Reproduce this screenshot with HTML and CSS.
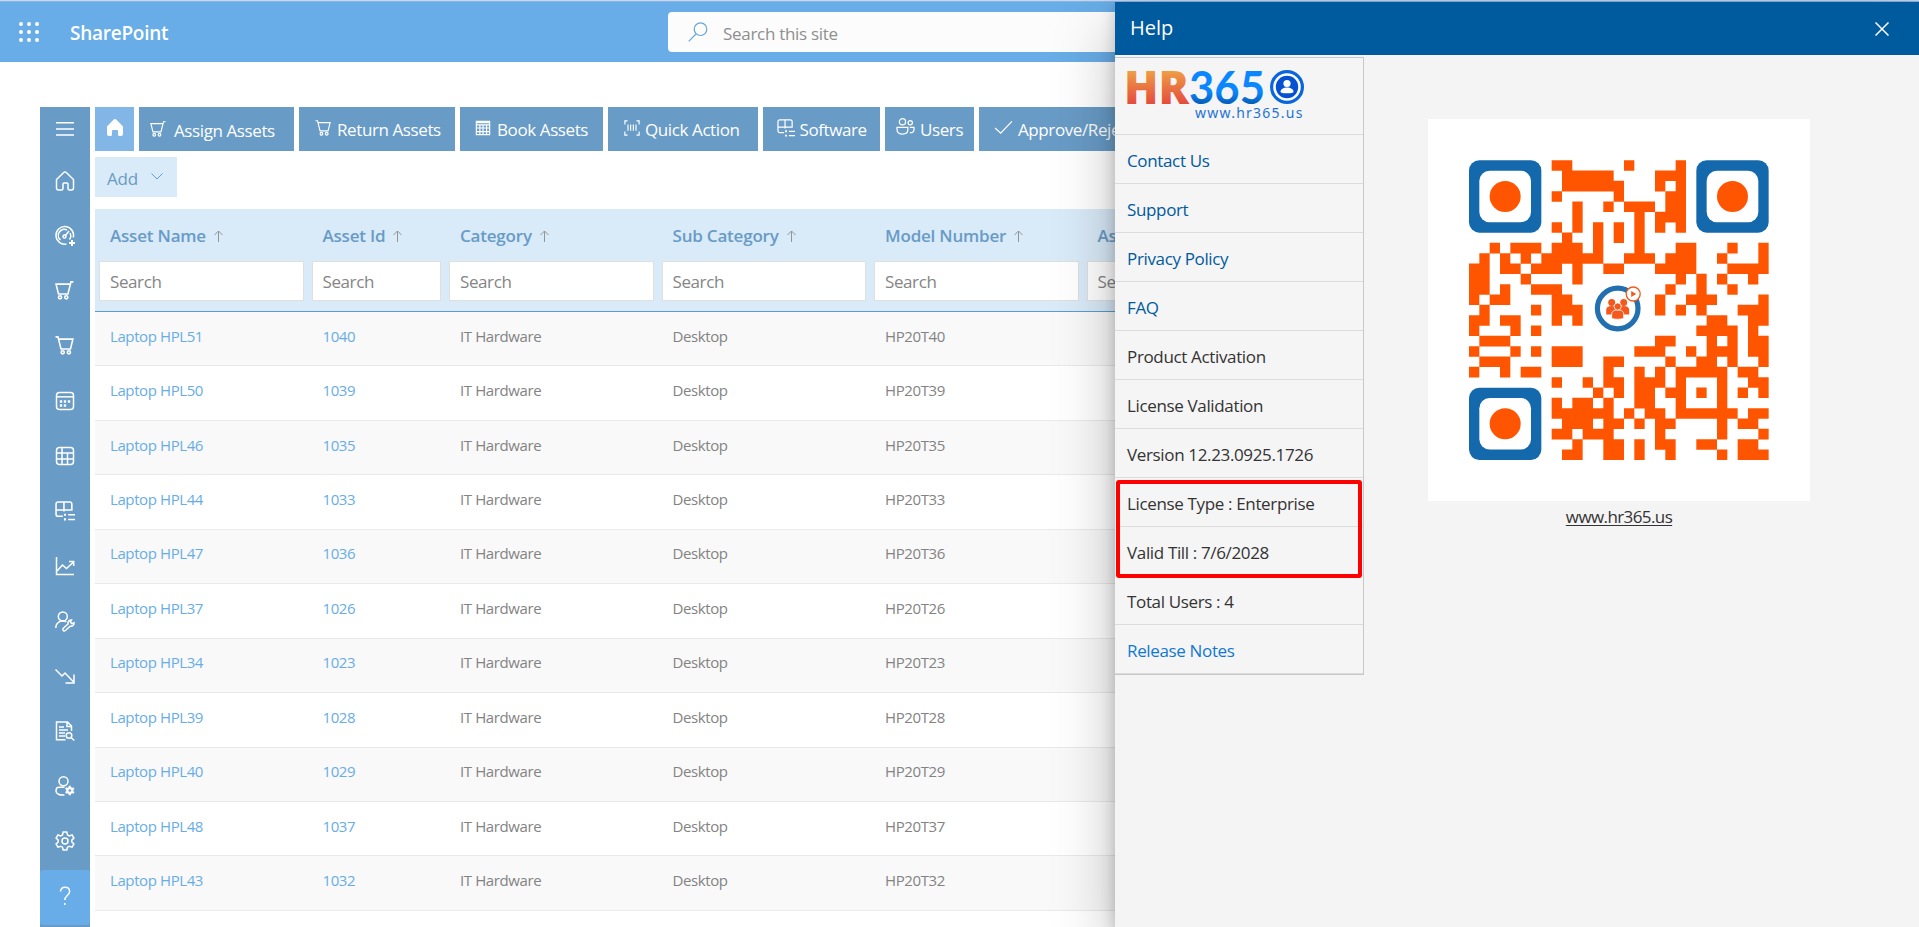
FILE: index.html
```html
<!DOCTYPE html>
<html lang="en">
<head>
<meta charset="utf-8">
<title>Asset Management - Help</title>
<link rel="stylesheet" href="styles.css">
</head>
<body>
<svg class="defs" width="0" height="0">
  <defs>
    <symbol id="cart" viewBox="0 0 18 18"><path d="M17.500 .8h-2.300l-2.900 11.500H3.300L1 3h13.500"/><circle cx="4.800" cy="15.500" r="1.500"/><circle cx="10.700" cy="15.500" r="1.500"/></symbol>
    <symbol id="cart-back" viewBox="0 0 18 18"><path d="M.5 .8h2.300l2.900 11.500h9L17 3H3.500"/><circle cx="7.300" cy="15.500" r="1.500"/><circle cx="13.200" cy="15.500" r="1.500"/></symbol>
    <symbol id="soft" viewBox="0 0 19 19"><path d="M7.500 14.500H3a2 2 0 0 1-2-2V3a2 2 0 0 1 2-2h11a2 2 0 0 1 2 2v5.500H1M8.500 1v9M12.500 13H19M12.500 17.500H19"/><path class="solid" d="M8.500 12h2v2h-2zM8.500 16.500h2v2h-2z"/></symbol>
    <symbol id="up" viewBox="0 0 9 12"><path d="M4.500 12V1M.5 5l4-4 4 4"/></symbol>
  </defs>
</svg>

<div class="page">
  <header class="suite">
    <svg class="waffle" viewBox="0 0 20 20"><path d="M2 2h0M10 2h0M18 2h0M2 10h0M10 10h0M18 10h0M2 18h0M10 18h0M18 18h0"/></svg>
    <span class="brand">SharePoint</span>
    <div class="site-search">
      <svg viewBox="0 0 20 20"><circle cx="12.500" cy="7.200" r="6.300"/><path d="M8 12L.7 19.300"/></svg>
      <span>Search this site</span>
    </div>
  </header>

  <div class="app">
    <nav class="rail">
      <a class="rail-menu"><svg viewBox="0 0 20 20"><path d="M1 3.700h18M1 9.900h18M1 16.100h18"/></svg></a>
      <a><svg viewBox="0 0 20 20"><path d="M1.500 8.500L8.700 1.500a1.800 1.800 0 0 1 2.600 0l7.200 7V17a2 2 0 0 1-2 2h-2a1.500 1.500 0 0 1-1.500-1.500V13a1 1 0 0 0-1-1H9a1 1 0 0 0-1 1v4.500A1.500 1.500 0 0 1 6.500 19h-3a2 2 0 0 1-2-2z"/></svg></a>
      <a><svg viewBox="0 0 20 20"><path d="M18.300 11.500A8.800 8.800 0 1 0 11.500 18M5.500 14A6 6 0 0 1 12 4M15 7a6 6 0 0 1-.5 6.500M10 10l4-5"/><circle cx="9.500" cy="10.500" r="1.500"/><path class="bold" d="M17 14v6M14 17h6"/></svg></a>
      <a><svg viewBox="0 0 19 19"><use href="#cart" width="18" height="18"/></svg></a>
      <a><svg viewBox="0 0 19 19"><use href="#cart-back" width="18" height="18"/></svg></a>
      <a><svg viewBox="0 0 20 20"><rect x="1.500" y="1.500" width="17" height="17" rx="3"/><path d="M1.500 5.800h17"/><path class="dots" d="M6 10.500h0M10 10.500h0M14 10.500h0M6 14.500h0M10 14.500h0"/></svg></a>
      <a><svg viewBox="0 0 20 20"><rect x="1.500" y="1.500" width="17" height="17" rx="3"/><path d="M7 1.500v17M1.500 7h17M1.500 13h17M12.500 7v11.500"/></svg></a>
      <a><svg viewBox="0 0 20 20"><use href="#soft" width="20" height="20"/></svg></a>
      <a><svg viewBox="0 0 20 20"><path d="M1.500 1v17.500H19M2 15l5.500-6 4 3.500L18.500 6M14 5.500h4.700V10"/></svg></a>
      <a><svg viewBox="0 0 20 20"><circle cx="7.800" cy="5.500" r="4.500"/><path d="M.8 17a7 7 0 0 1 10.500-6.200"/><path d="M8.300 17.300l4.700-4.300a3.300 3.300 0 0 1 3.500-4l-1.200 2 1.500 1.600 2.200-1a3.200 3.200 0 0 1-3.800 3.600l-4.800 4.300a1.500 1.500 0 0 1-2.100-2.200z"/></svg></a>
      <a><svg viewBox="0 0 20 20"><path d="M.5 3.500l6.500 6.500 3-3 8.700 9M19 8.500V17H10.500"/></svg></a>
      <a><svg viewBox="0 0 20 20"><path d="M10.500 18.800H1.500V1h11l4 4v5M12 1v4.500h4.500M4 6h5M4 9h9M4 12h6M4 15h6"/><circle cx="14" cy="14.500" r="2.800"/><path d="M16 16.500l3.300 3"/></svg></a>
      <a><svg viewBox="0 0 20 20"><circle cx="8.500" cy="5.300" r="4.500"/><path d="M9.500 19c-5 .4-8.500-1-8.500-4 0-2.500 1-3.700 3-3.700h5.500"/><circle class="solid" cx="14.800" cy="14.500" r="3.600"/><path class="cog" d="M14.800 9.700v9.600M10.600 12.100l8.400 4.800M19 12.100l-8.400 4.800"/><circle class="hole" cx="14.800" cy="14.500" r="1.300"/></svg></a>
      <a><svg viewBox="0 0 20 20"><path d="M8.200 1h3.600l.7 2.900 1.700 1 2.900-.9 1.800 3.100-2.100 2v1.900l2.100 2-1.800 3.100-2.900-.9-1.700 1-.7 2.800H8.200l-.7-2.800-1.700-1-2.900.9L1.100 13l2.100-2V9.100L1.100 7.100 2.900 4l2.900.9 1.700-1z"/><circle cx="10" cy="10" r="3"/></svg></a>
      <a class="current"><svg viewBox="0 0 20 20"><path d="M5.500 5.500A4.600 4.600 0 0 1 10 1.300c2.800 0 4.600 1.700 4.600 4.200 0 3.800-4.800 4.300-4.800 8.500M9.800 17v2"/></svg></a>
    </nav>

    <main class="content">
      <div class="tabs">
        <a class="tab tab-home"><svg viewBox="0 0 16 17"><path class="solid" d="M0 7.500L6.500.8a2.100 2.100 0 0 1 3 0L16 7.500V15a2 2 0 0 1-2 2h-1.500a1.500 1.500 0 0 1-1.500-1.500V12a1 1 0 0 0-1-1H6a1 1 0 0 0-1 1v3.500A1.500 1.500 0 0 1 3.500 17H2a2 2 0 0 1-2-2z"/></svg></a>
        <a class="tab tab-assign"><svg viewBox="0 0 18 18"><use href="#cart"/></svg><span>Assign Assets</span></a>
        <a class="tab tab-return"><svg viewBox="0 0 18 18"><use href="#cart-back"/></svg><span>Return Assets</span></a>
        <a class="tab tab-book"><svg viewBox="0 0 18 18"><path d="M1.500 1.500h15v15h-15zM1.500 3h15M1.500 5.500h15M1.500 9h15M1.500 13h15M5.500 5v11M9 5v11M13 5v11"/></svg><span>Book Assets</span></a>
        <a class="tab tab-quick"><svg viewBox="0 0 18 18"><path d="M1 5V1h3M14 1h3v4M17 13v4h-3M4 17H1v-4M4.500 5v7M7.500 5v7M10.500 5v7M13.500 5v7"/></svg><span>Quick Action</span></a>
        <a class="tab tab-soft"><svg viewBox="0 0 19 19"><use href="#soft"/></svg><span>Software</span></a>
        <a class="tab tab-users"><svg viewBox="0 0 20 18"><circle cx="6.800" cy="4" r="3.300"/><circle cx="15" cy="5" r="2.300"/><path d="M1 10h11.500v2.500C12.500 15.500 10 17 6.800 17S1 15.500 1 12.500zM14.500 10H19v2.500c0 2.300-2 3.500-4.500 3"/></svg><span>Users</span></a>
        <a class="tab tab-approve"><svg viewBox="0 0 20 16"><path d="M1 8.500l6 5.500L19 1.500"/></svg><span>Approve/Reject</span></a>
      </div>

      <button class="add"><span>Add</span><svg viewBox="0 0 12 7"><path d="M.5 .5L6 6l5.500-5.500"/></svg></button>

      <section class="grid">
        <div class="head">
          <div class="col"><div class="title">Asset Name<svg><use href="#up"/></svg></div><div class="filter">Search</div></div>
          <div class="col"><div class="title">Asset Id<svg><use href="#up"/></svg></div><div class="filter">Search</div></div>
          <div class="col"><div class="title">Category<svg><use href="#up"/></svg></div><div class="filter">Search</div></div>
          <div class="col"><div class="title">Sub Category<svg><use href="#up"/></svg></div><div class="filter">Search</div></div>
          <div class="col"><div class="title">Model Number<svg><use href="#up"/></svg></div><div class="filter">Search</div></div>
          <div class="col"><div class="title">Assigned To<svg><use href="#up"/></svg></div><div class="filter">Search</div></div>
        </div>
        <div class="row"><a>Laptop HPL51</a><a>1040</a><span>IT Hardware</span><span>Desktop</span><span>HP20T40</span></div>
        <div class="row"><a>Laptop HPL50</a><a>1039</a><span>IT Hardware</span><span>Desktop</span><span>HP20T39</span></div>
        <div class="row"><a>Laptop HPL46</a><a>1035</a><span>IT Hardware</span><span>Desktop</span><span>HP20T35</span></div>
        <div class="row"><a>Laptop HPL44</a><a>1033</a><span>IT Hardware</span><span>Desktop</span><span>HP20T33</span></div>
        <div class="row"><a>Laptop HPL47</a><a>1036</a><span>IT Hardware</span><span>Desktop</span><span>HP20T36</span></div>
        <div class="row"><a>Laptop HPL37</a><a>1026</a><span>IT Hardware</span><span>Desktop</span><span>HP20T26</span></div>
        <div class="row"><a>Laptop HPL34</a><a>1023</a><span>IT Hardware</span><span>Desktop</span><span>HP20T23</span></div>
        <div class="row"><a>Laptop HPL39</a><a>1028</a><span>IT Hardware</span><span>Desktop</span><span>HP20T28</span></div>
        <div class="row"><a>Laptop HPL40</a><a>1029</a><span>IT Hardware</span><span>Desktop</span><span>HP20T29</span></div>
        <div class="row"><a>Laptop HPL48</a><a>1037</a><span>IT Hardware</span><span>Desktop</span><span>HP20T37</span></div>
        <div class="row"><a>Laptop HPL43</a><a>1032</a><span>IT Hardware</span><span>Desktop</span><span>HP20T32</span></div>
      </section>
    </main>
  </div>
</div>

<aside class="panel">
  <div class="panel-head">
    <h2>Help</h2>
    <svg class="close" viewBox="0 0 14 14"><path d="M.5 .5l13 13M13.500 .5l-13 13"/></svg>
  </div>
  <div class="panel-body">
    <ul class="links">
      <li class="logo">
        <svg viewBox="0 0 190 60">
          <defs>
            <linearGradient id="warm" x1="0" y1="0" x2="0" y2="1"><stop offset=".25" stop-color="#ef9f45"/><stop offset=".8" stop-color="#e4493f"/></linearGradient>
            <linearGradient id="cool" x1="0" y1="0" x2="0" y2="1"><stop offset=".6" stop-color="#0a87ff"/><stop offset=".8" stop-color="#0560bd"/></linearGradient>
          </defs>
          <text class="logo-hr" x="-3" y="38" textLength="65" lengthAdjust="spacingAndGlyphs">HR</text>
          <text class="logo-num" x="62" y="38" textLength="76" lengthAdjust="spacingAndGlyphs">365</text>
          <circle cx="160" cy="21" r="15.400" fill="#fff" stroke="#0a66dc" stroke-width="3.200"/>
          <circle cx="160" cy="21" r="11.200" fill="#0551d0"/>
          <circle cx="160" cy="17.500" r="3.600" fill="#fff"/>
          <path d="M153.500 26c0-3 3-4.500 6.500-4.500s6.500 1.500 6.500 4.500c0 1.800-13 1.800-13 0z" fill="#fff"/>
          <text class="logo-url" x="68" y="52" textLength="107" lengthAdjust="spacing">www.hr365.us</text>
        </svg>
      </li>
      <li class="link">Contact Us</li>
      <li class="link">Support</li>
      <li class="link">Privacy Policy</li>
      <li class="link">FAQ</li>
      <li>Product Activation</li>
      <li>License Validation</li>
      <li>Version 12.23.0925.1726</li>
      <li class="marked">License Type : Enterprise</li>
      <li>Valid Till : 7/6/2028</li>
      <li>Total Users : 4</li>
      <li class="link bright">Release Notes</li>
    </ul>
    <div class="qr-area">
      <svg class="qr" viewBox="0 0 382 382">
        <rect width="382" height="382" fill="#fff"/>
        <g transform="translate(41 41.300) scale(10.333)">
          <path transform="translate(0 .5)" stroke="#ff5500" stroke-width="1.020" fill="none" d="M8 0h2M15 0h1M20 0h1M9 1h5M18 1h3M9 2h6M18 2h1M20 2h1M8 3h1M14 3h1M19 3h2M10 4h1M13 4h1M15 4h3M19 4h2M10 5h1M16 5h1M18 5h3M8 6h1M10 6h1M12 6h1M14 6h1M16 6h1M18 6h1M20 6h1M9 7h1M12 7h1M14 7h1M16 7h1M2 8h1M4 8h3M8 8h3M12 8h1M16 8h1M20 8h2M25 8h1M28 8h1M1 9h1M3 9h1M5 9h1M7 9h6M15 9h3M19 9h3M24 9h1M28 9h1M0 10h2M3 10h2M6 10h3M10 10h1M13 10h2M18 10h4M25 10h4M0 11h2M5 11h1M10 11h1M20 11h1M22 11h1M24 11h1M27 11h1M0 12h2M3 12h1M6 12h3M19 12h1M22 12h1M25 12h1M0 13h1M2 13h2M8 13h2M18 13h1M21 13h3M28 13h1M1 14h1M6 14h1M8 14h3M18 14h1M20 14h1M22 14h1M26 14h3M0 15h2M3 15h2M8 15h1M10 15h1M23 15h2M27 15h2M0 16h1M4 16h1M6 16h1M22 16h4M27 16h1M1 17h3M18 17h2M23 17h1M25 17h1M27 17h2M0 18h1M4 18h1M6 18h1M8 18h3M16 18h3M21 18h1M23 18h3M27 18h2M1 19h3M8 19h3M13 19h2M19 19h1M22 19h2M25 19h1M28 19h1M0 20h1M3 20h1M5 20h2M13 20h1M16 20h1M18 20h1M20 20h5M26 20h2M8 21h1M11 21h1M13 21h2M16 21h3M20 21h1M24 21h1M27 21h2M12 22h1M14 22h1M16 22h2M19 22h2M22 22h1M24 22h1M26 22h1M28 22h1M8 23h1M10 23h2M13 23h1M16 23h2M20 23h1M24 23h1M8 24h6M15 24h1M17 24h2M20 24h6M27 24h2M9 25h3M13 25h2M16 25h1M18 25h2M24 25h1M26 25h2M8 26h2M11 26h3M18 26h1M24 26h1M28 26h1M10 27h1M13 27h2M16 27h1M18 27h2M22 27h2M26 27h2M9 28h2M13 28h2M16 28h1M19 28h1M24 28h1M26 28h3"/>
          <g fill="#1469ad"><rect width="7" height="7" rx="1"/><rect x="22" width="7" height="7" rx="1"/><rect y="22" width="7" height="7" rx="1"/></g>
          <g fill="#fff"><rect x="1" y="1" width="5" height="5" rx="1"/><rect x="23" y="1" width="5" height="5" rx="1"/><rect x="1" y="23" width="5" height="5" rx="1"/></g>
          <g fill="#ff5500"><circle cx="3.500" cy="3.500" r="1.500"/><circle cx="25.500" cy="3.500" r="1.500"/><circle cx="3.500" cy="25.500" r="1.500"/></g>
        </g>
        <g transform="translate(189.700 189.500)">
          <circle r="20.300" fill="#fff" stroke="#2270b0" stroke-width="5.200"/>
          <g fill="#f4581c">
            <circle cx="-6" cy="-6" r="3.500"/><circle cx="6" cy="-6" r="3.500"/>
            <path d="M-11.500 6V1.500c0-2.500 2-4 5.500-4s5.500 1.500 5.500 4V6zM.5 6V1.500c0-2.500 2-4 5.500-4s5.500 1.500 5.500 4V6z"/>
            <g stroke="#fff" stroke-width=".8"><path d="M-6 10V5.500C-6 3-4 1.500 0 1.500S6 3 6 5.500V10c-3 1-9 1-12 0z"/><circle cy="-2" r="3.600"/></g>
          </g>
          <circle cx="15.500" cy="-14.500" r="7" fill="#fff" stroke="#f4581c" stroke-width="1.300"/>
          <path d="M13.500 -17.500v6l5-3z" fill="#f4581c"/>
        </g>
      </svg>
      <a class="site">www.hr365.us</a>
    </div>
  </div>
</aside>
</body>
</html>
```
FILE: styles.css
```css
*, *::after { box-sizing: border-box; }

html, body { height: 100%; }

body {
  margin: 0;
  overflow: hidden;
  background: #fff;
  font-family: "Open Sans", "Noto Sans", sans-serif;
  font-size: 17px;
  color: #333;
}

svg { fill: none; stroke: currentColor; flex: none; }
svg .solid { fill: currentColor; stroke: none; }
.defs { position: absolute; }

.page {
  height: 927px;
  border-top: 1px solid #c3d9f3;
  overflow: hidden;
}

/* suite bar */
.suite {
  display: flex;
  align-items: center;
  height: 61px;
  padding-left: 19px;
  border-top: 1px solid #8fb4e0;
  background: #68ade7;
  color: #fff;
}
.waffle { width: 20px; height: 20px; stroke-width: 4; stroke-linecap: round; }
.brand {
  width: 598px;
  padding: 2px 0 0 31px;
  font-size: 19px;
  font-weight: 600;
  letter-spacing: -.25px;
}
.site-search {
  display: flex;
  align-items: center;
  gap: 15px;
  width: 580px;
  height: 40px;
  margin-left: 31px;
  margin-right: -400px;
  padding: 0 20px;
  border-radius: 4px;
  background: #fcfcfc;
  color: #8f8f8f;
  letter-spacing: -.3px;
}
.site-search svg { width: 20px; height: 20px; stroke: #6ba5d8; stroke-width: 1.2; }
.site-search span { padding-top: 3px; }

/* application shell */
.app { display: flex; gap: 5px; padding: 45px 0 0 40px; width: 2100px; }

.rail {
  display: flex;
  flex-direction: column;
  width: 50px;
  height: 820px;
  background: #689bc6;
  color: #fff;
}
.rail a {
  display: flex;
  align-items: center;
  justify-content: center;
  flex: none;
  height: 55px;
  padding-bottom: 4px;
}
.rail a.rail-menu { height: 48px; padding-bottom: 4px; }
.rail a.current { border-radius: 3px; background: #68ade7; padding-bottom: 3px; }
.rail svg { width: 20px; height: 20px; stroke-width: 1.5; overflow: visible; }
.rail .bold { stroke-width: 2; }
.rail .dots { stroke-width: 2.4; stroke-linecap: square; }
.rail .cog { stroke-width: 2.2; }
.rail .hole { fill: #689bc6; stroke: none; }

.content { flex: 1; }

.tabs { display: flex; gap: 5px; }
.tab {
  display: flex;
  align-items: center;
  height: 44px;
  padding-top: 1px;
  background: #689bc6;
  color: #fff;
  font-size: 17px;
  letter-spacing: -.4px;
  white-space: nowrap;
}
.tab svg { width: 16px; height: 16px; margin-bottom: 4px; stroke-width: 1.3; }
.tab-home { width: 39px; justify-content: center; background: #82b6e6; }
.tab-home svg { width: 16px; height: 17px; }
.tab-assign { width: 155px; padding: 3px 0 0 11px; gap: 8px; }
.tab-return { width: 156px; padding-left: 16px; gap: 6px; }
.tab-book { width: 143px; padding-left: 15px; gap: 6px; }
.tab-quick { width: 149.500px; padding-left: 16px; gap: 5px; }
.tab-soft { width: 117.500px; padding-left: 14px; gap: 5px; }
.tab-soft svg { width: 18px; height: 18px; }
.tab-users { width: 89px; padding-left: 11px; gap: 5px; }
.tab-users svg { width: 19px; height: 17px; margin-bottom: 6px; }
.tab-approve { width: 173px; padding-left: 15px; gap: 5px; }
.tab-approve svg { width: 19px; height: 15px; margin-bottom: 4px; }

.add {
  display: flex;
  align-items: center;
  gap: 13px;
  width: 82px;
  height: 40px;
  margin: 6px 0 12px;
  padding: 3px 0 0 12px;
  border: 0;
  background: #d9eaf8;
  color: #689bc6;
  font: inherit;
}
.add span { letter-spacing: -.2px; }
.add svg { width: 12px; height: 7px; margin-bottom: 5px; }

/* asset grid */
.head, .row {
  display: grid;
  grid-template-columns: 212.500px 137.500px 212.500px 212.500px 212.500px 212.500px;
}
.head {
  height: 103px;
  border-bottom: 1px solid #5f9bcb;
  background: #d9eaf8;
}
.title {
  display: flex;
  align-items: center;
  gap: 8px;
  height: 52px;
  padding-left: 15px;
  color: #689bc6;
  font-size: 17px;
  font-weight: 600;
  letter-spacing: -.2px;
  white-space: nowrap;
}
.title svg { width: 9px; height: 12px; stroke: #949494; margin-top: 2px; }
.filter {
  display: flex;
  align-items: center;
  height: 40px;
  margin: 0 4px;
  padding-left: 10px;
  border: 1px solid #e1dfdd;
  background: #fff;
  color: #858585;
  letter-spacing: -.4px;
  padding-top: 1px;
}
.row {
  align-items: center;
  height: 54.450px;
  padding-bottom: 6px;
  border-bottom: 1px solid #e9e9e9;
  color: #838383;
  font-size: 15px;
  letter-spacing: -.4px;
}
.row:nth-child(even) { background: #f9f9f9; }
.row > * { padding-left: 15px; }
.row a { color: #68ade7; }

/* help panel, laid over the page */
.panel {
  position: absolute;
  top: 2px;
  right: 0;
  width: 804px;
  height: 925px;
  background: #f4f4f4;
  box-shadow: 0 26px 58px rgba(0, 0, 0, .25), 0 5px 14px rgba(0, 0, 0, .2);
}
.panel-head {
  display: flex;
  align-items: center;
  justify-content: space-between;
  height: 53px;
  padding: 0 30px 0 15px;
  background: #005a9e;
  color: #fff;
}
.panel-head h2 { margin: 0; padding-bottom: 2px; font-size: 20px; font-weight: 400; }
.close { width: 14px; height: 14px; margin-top: 1px; stroke-width: 1.5; }
.panel-body { display: flex; align-items: flex-start; padding-top: 2px; }

.links {
  width: 249px;
  margin: 0;
  padding: 0;
  list-style: none;
  border: solid #c8c8c8;
  border-width: 1px 1px 1px 0;
  background: #f5f5f5;
}
.links li {
  display: flex;
  align-items: center;
  position: relative;
  height: 49px;
  padding: 2px 0 0 12px;
  border-bottom: 1px solid #dcdcdc;
  font-size: 17px;
  letter-spacing: -.35px;
  white-space: nowrap;
}
.links li.logo { height: 77px; padding: 0 0 0 12px; }
.links li.link { color: #005a9e; }
.links li.bright { color: #0f78d4; }
.logo svg { width: 190px; height: 60px; stroke: none; overflow: visible; }
.logo-hr { font: 800 46px "Open Sans", sans-serif; fill: url(#warm); letter-spacing: 0; }
.logo-num { font: 700 46px Lato, sans-serif; fill: url(#cool); letter-spacing: 0; }
.logo-url { font: 400 14px "Noto Sans", sans-serif; fill: #1e73d2; }

/* frame drawn over the two licence rows */
.marked::after {
  content: "";
  position: absolute;
  z-index: 1;
  top: 2px;
  left: 1px;
  width: 246px;
  height: 98px;
  border: 4px solid #f00;
  border-radius: 3px;
}

.qr-area {
  display: flex;
  flex-direction: column;
  align-items: center;
  gap: 4px;
  padding: 62px 0 0 64px;
}
.qr { width: 382px; height: 382px; stroke: none; }
.site { font-size: 17px; letter-spacing: -.6px; text-decoration: underline; text-underline-offset: 2px; }
```
